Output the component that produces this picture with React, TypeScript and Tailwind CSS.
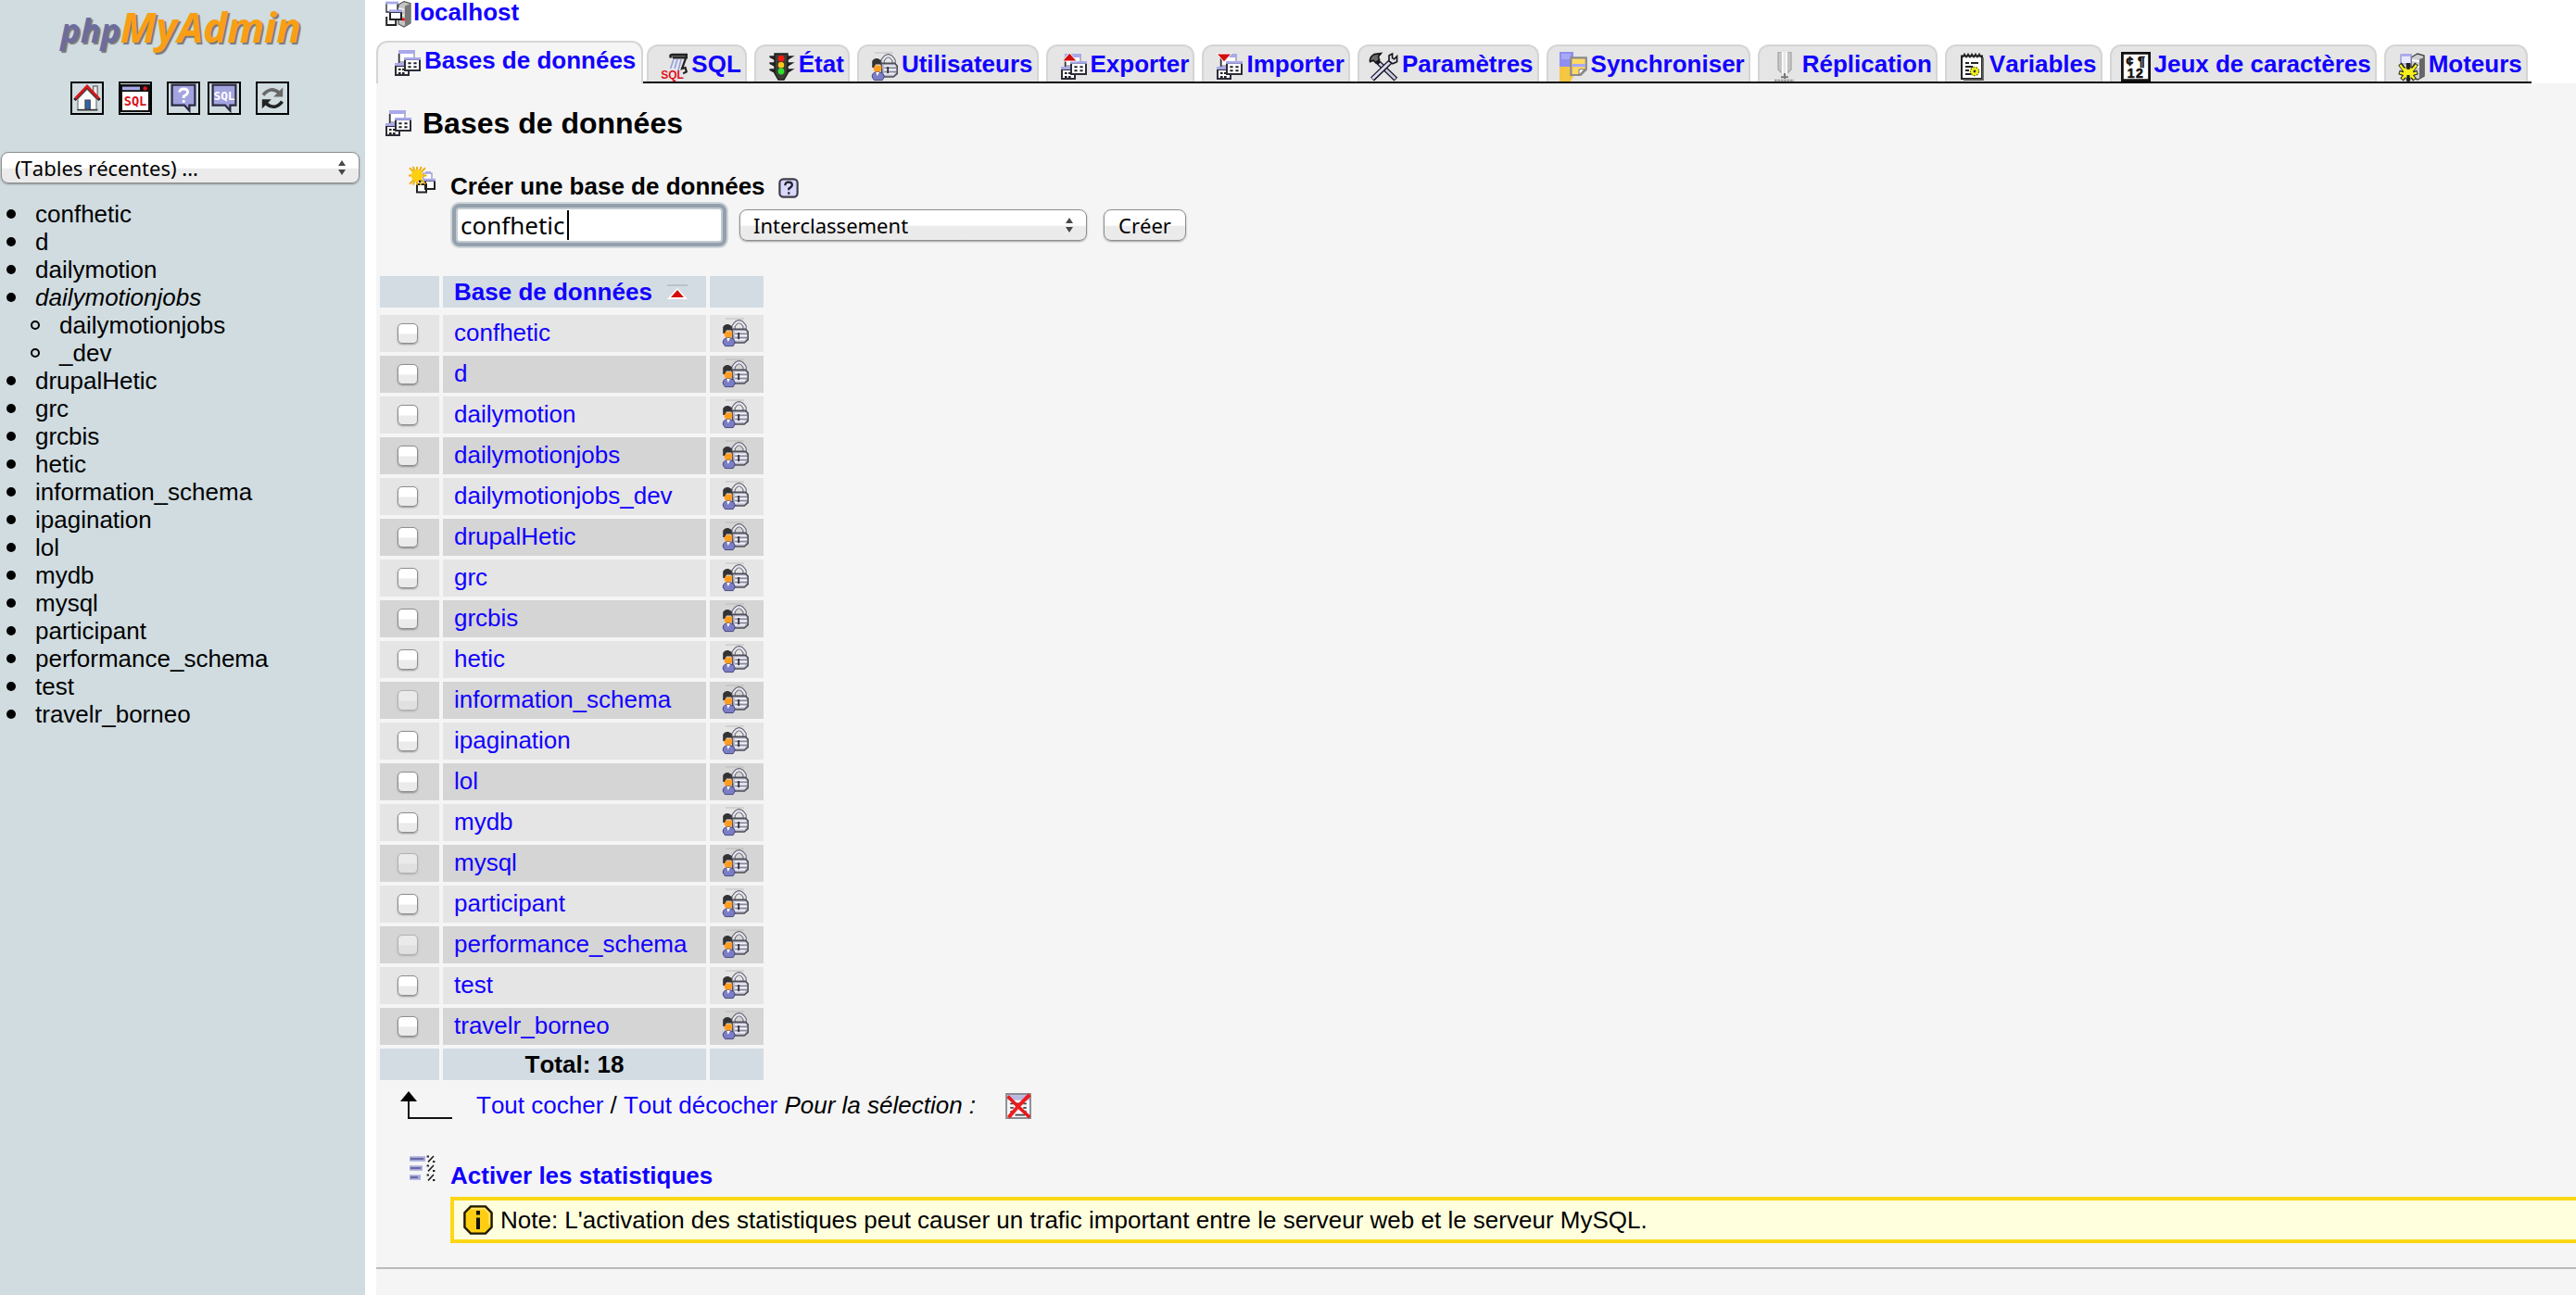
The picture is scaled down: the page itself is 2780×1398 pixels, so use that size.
import React from 'react';

const recentDatabases = [
  'drupalHetic', 'grc', 'grcbis', 'hetic', 'information_schema', 'ipagination', 'lol',
  'mydb', 'mysql', 'participant', 'performance_schema', 'test', 'travelr_borneo',
];

const databases = [
  'confhetic', 'd', 'dailymotion', 'dailymotionjobs', 'dailymotionjobs_dev', ...recentDatabases,
];

const systemDatabases = ['information_schema', 'mysql', 'performance_schema'];

function Icon({ children, className = 'size-8' }: { children: React.ReactNode; className?: string }) {
  return (
    <svg viewBox="0 0 16 16" className={`${className} shrink-0`} aria-hidden="true">
      {children}
    </svg>
  );
}

/* A small window with a title bar and four cells. */
function TableSheets() {
  return (
    <>
      <path d="M4.5 1.5h8v6h-8z" fill="#fff" stroke="#9a9ab4" strokeWidth=".7" />
      <path d="M4 1h9v2H4z" fill="#a9a9ea" />
      <path d="M4.3 3v6" stroke="#333" strokeWidth=".8" />
      <path d="M2.5 9.5h7v5h-7z" fill="#fff" stroke="#2c2c38" />
      <path d="M2 8h6v1.5H2z" fill="#a9a9ea" />
      <path d="M4 11h1.3v1H4zM6 11h1.3v1H6zM4 13h1.3v1H4zM6 13h1.3v1H6z" fill="#222" />
      <path d="M7.5 6h8v6h-8z" fill="#fff" stroke="#2c2c38" />
      <path d="M7 5h9v1.4H7z" fill="#a9a9ea" />
      <path d="M9.2 7.6h1.6v1H9.2zM12.2 7.6h1.6v1h-1.6zM9.2 9.6h1.6v1H9.2zM12.2 9.6h1.6v1h-1.6z" fill="#222" />
    </>
  );
}

const DatabaseIcon = () => <Icon><TableSheets /></Icon>;

const ExportIcon = () => (
  <Icon>
    <TableSheets />
    <path d="M6.6.6 10.6 5H2.8z" fill="#d40d0d" stroke="#fff" strokeWidth=".5" />
  </Icon>
);

const ImportIcon = () => (
  <Icon>
    <TableSheets />
    <path d="M6 5.4 10 1H2z" fill="#d40d0d" stroke="#fff" strokeWidth=".5" />
  </Icon>
);

const ServerIcon = () => (
  <Icon>
    <path d="M9 2.5 12 .8l3.5 1v10.7L12 14.5 9 13z" fill="#c4c4c4" stroke="#555" strokeWidth=".6" />
    <path d="M12.5 3.2 15.5 2v10.6l-3 1.6z" fill="#777" />
    <path d="M9 4.5l3 .8M9 7.5l3 .8" stroke="#f4f4f4" />
    <path d="M2.5 1.5h6v5h-6z" fill="#fff" stroke="#2c2c38" strokeWidth=".7" />
    <path d="M2 .8h7v1.4H2z" fill="#a9a9ea" />
    <path d="M2.6 9v4.5h5V11" fill="#fff" stroke="#222" />
    <path d="M4.5 6.5h6v4h-6z" fill="#fff" stroke="#222" />
    <path d="M4 5.2h7v1.4H4z" fill="#a9a9ea" />
    <path d="M11 9.8h1.4v1.4H11z" fill="#f00" />
  </Icon>
);

const SqlScrollIcon = () => (
  <Icon>
    <path d="M8 3h6l-2 6.5H6.5z" fill="#e4e7fb" />
    <path d="M7 3.2c-.8-1.6 0-1.7 1-1.7h7.5v1.7H8" fill="#777" stroke="#222" strokeWidth="1.2" />
    <path d="M8.5 4 6.8 9M10.5 4 9 9M12.5 4 11 10" stroke="#9aa0c8" strokeWidth=".8" />
    <path d="M15 3.5 13 9l1.8-.5.6 2.2-1.8 1" fill="none" stroke="#222" strokeWidth="1.1" />
    <text x="1.6" y="14.6" fontSize="6" fontWeight="700" fontFamily="Liberation Sans, sans-serif" fill="#e0101a">SQL</text>
  </Icon>
);

const TrafficLightIcon = () => (
  <Icon>
    <path d="M2.6 2.5h2v1.3l-2-1zM2.6 6h2v1.3l-2-1zM2.6 9.5h2v1.3l-2-1zM12 2.5h2.4L12 4zM12 6h2.4L12 7.5zM12 9.5h2.4L12 11z" fill="#222" stroke="#222" strokeWidth=".8" />
    <path d="M5 1h7v10.5L10 15H7l-2-3.5z" fill="#3d3d33" stroke="#1c1c1c" strokeWidth=".7" />
    <circle cx="8.500" cy="3.6" r="1.7" fill="#f21b12" />
    <circle cx="8.500" cy="7.1" r="1.6" fill="#ffc81c" />
    <circle cx="8.500" cy="10.5" r="1.7" fill="#2fe02f" />
  </Icon>
);

const UserLockIcon = () => (
  <Icon>
    <path d="M3.5.5h10" stroke="#b5b5b5" strokeWidth=".4" />
    <path d="M7.8 7V4.6Q10.8-.4 13.800 4.600V7" fill="none" stroke="#5f5f68" strokeWidth="2.1" />
    <path d="M7.8 7V4.600Q10.8-.2 13.800 4.600V7" fill="none" stroke="#e6e6f2" strokeWidth="1.1" />
    <path d="M7 6.200h7.300l1.300 1.300v4.300l-2 1.700H7.500z" fill="#b9bacb" stroke="#4d4d57" strokeWidth=".8" />
    <path d="M8.500 7.600h6.200M8.500 9.700h6.600M8.500 11.800h5.600" stroke="#f4f4fc" strokeWidth=".8" />
    <path d="M8.800 8.700h6.300M8.800 10.800h6.300" stroke="#777784" strokeWidth=".4" />
    <path d="M10.600 8v3.600" stroke="#2d2d36" strokeWidth=".9" />
    <path d="M2.800 7.200h4.300v2.300L5.800 11.200H4.100L2.800 9.500z" fill="#ff9d22" />
    <path d="M2.100 8.500V5Q3 3.300 5 3.500l1.900 1v2.300H4L2.900 8.500z" fill="#333335" />
    <path d="M2.100 13.500q0-2.300 1.900-2.500h2q2.500.2 2.600 2.500l-1 1.800H3.200z" fill="#7b7ec6" stroke="#45477f" strokeWidth=".5" />
    <path d="m4.100 11 .8 2 1.100-2z" fill="#fff" />
  </Icon>
);

const ToolsIcon = () => (
  <Icon>
    <path d="m4.3 4.8 10.4 10" stroke="#15151c" strokeWidth="2.7" />
    <path d="m5.8 6.2 8.6 8.3" stroke="#c9cbe9" strokeWidth="1.4" />
    <path d="M11.8 5.2 2 14.7" stroke="#15151c" strokeWidth="2.8" />
    <path d="M11.5 5.5 2.1 14.5" stroke="#dbdcf5" strokeWidth="1.5" />
    <path d="M.8 5.3Q.3 3 3 1.3L6.7.8 5.2 2.6l.6 1.6-2 1.6-1.2-1.2z" fill="#6d6d68" stroke="#15151c" strokeWidth=".8" />
    <path d="M12.8 1 11 2v3l2 1.4 2.3-1V2.4l-1.5 1.5-1-.6z" fill="#dbdce8" stroke="#15151c" strokeWidth=".8" />
  </Icon>
);

const SyncIcon = () => (
  <Icon>
    <path d="M1 0h7.5v8H1z" fill="#8f8ff2" />
    <path d="M1 8h8v4.5L7 16H1z" fill="#f5c644" />
    <path d="M2 1h5v3H2z" fill="#a8a8f7" />
    <path d="M7.2 3.2h8.2v6.3l-3 3H7.2z" fill="#ffda62" stroke="#8b8b8b" strokeWidth="1.1" />
    <path d="M8 6.5h7v1.600H8z" fill="#a8a8f7" />
    <path d="M11.5 12.3V9.4h3.2z" fill="#fff" stroke="#777" strokeWidth=".5" />
  </Icon>
);

const ReplicationIcon = () => (
  <Icon>
    <path d="M5 0h2v11.5l-2-2zM10 0h2v9.5l-2 2z" fill="#c6c6c6" stroke="#a2a2a2" strokeWidth=".6" />
    <path d="M7.300 0v12M9.600 0v12" stroke="#fff" strokeWidth=".9" />
    <path d="M8.500 11.5v3M6.5 13.600h3.900" stroke="#777" />
    <path d="M3 15.400h10.500" stroke="#969696" strokeWidth="1" strokeDasharray="1.3 .4" />
  </Icon>
);

const VariablesIcon = () => (
  <Icon>
    <path d="M3 2.2h11v12.3H3z" fill="#fff" stroke="#222" />
    <path d="M14.4 3v12H4" fill="none" stroke="#555" />
    <path d="m3.5 3 1-2 1 2 1-2 1 2 1-2 1 2 1-2 1 2 1-2 1 2" fill="none" stroke="#222" strokeWidth=".6" />
    <path d="M5 6h2M8 6h4M5 8h4M5 10h2M5 12h3" stroke="#222" strokeWidth=".9" />
    <circle cx="10" cy="10.5" r="2.3" fill="#f0f01c" stroke="#71710c" strokeWidth=".6" strokeDasharray="1 .6" />
    <circle cx="10" cy="10.5" r=".7" fill="#333" />
  </Icon>
);

const CharsetIcon = () => (
  <Icon>
    <path d="M.7.7h14.6v14.600H.7z" fill="#fff" stroke="#111" strokeWidth="1.4" />
    <g fontFamily="Liberation Sans, sans-serif" fontSize="7" fill="#111" stroke="#111" strokeWidth=".3">
      <text x="2.800" y="7.600">¢</text>
      <text x="9" y="7.600">¶</text>
      <text x="3.400" y="14">1</text>
      <text x="8" y="14">2</text>
    </g>
  </Icon>
);

const EnginesIcon = () => (
  <Icon>
    <path d="M8.500 3 12 1l3.5 1v11L12 15 8.500 13.5z" fill="#cfcfcf" stroke="#444" strokeWidth=".7" />
    <path d="M13 4 15.5 3v10L13 14.5z" fill="#666" />
    <path d="M9 4.500l4 .6M9 7.500l4 .6" stroke="#fff" strokeWidth=".9" />
    <path d="M3 1.5h5.500v5H3z" fill="#e8e8ff" stroke="#8888c8" strokeWidth=".6" />
    <path d="M3 1h6v1.400H3z" fill="#a9a9ea" />
    <path d="M7 6v9.500M2.500 6.500l3 4M11.500 6.500l-3 4M2 11l3 1M12 11l-3 1M3.500 15l2-2.500M10.500 15l-2-2.500" stroke="#222" strokeWidth="2.300" />
    <path d="M2.600 7l3 4M11.400 7l-3 4M2.400 11.200l3 1M11.600 11.200l-3 1M3.700 14.600l2-2.500M10.300 14.600l-2-2.500M5 9.300h4v4H5z" fill="#f6f01c" stroke="#f6f01c" strokeWidth="1.200" />
    <path d="M7 6v3.500M7 12.500V16" stroke="#222" strokeWidth="1.600" />
  </Icon>
);

const NewDatabaseIcon = () => (
  <Icon>
    <path d="M9.500 4.500h4.500v4H9.500z" fill="#fff" stroke="#8c8cb0" strokeWidth=".6" />
    <path d="M6 10.500h5v4.300H6zM10.500 8.500h5V13h-5z" fill="#fff" stroke="#222" />
    <path d="M10 7.400h6v1.300h-6zM10.500 3.500h3v1.200h-3z" fill="#a9a9ea" />
    <path d="M6 1v9.800M1.500 5.800h9.800M2 1.600l8.500 8.700M10.500 1.600 2 10.300M3.800 1l4.400 9.800M8.400 1 3.800 10.800" stroke="#f0b010" strokeWidth="1" />
    <circle cx="6" cy="5.800" r="3.200" fill="#ffd012" />
    <path d="M7 8.300h1.200v1.200H7z" fill="#222" />
  </Icon>
);

const StatisticsIcon = () => (
  <Icon>
    <path d="M2 2.5h8.5M2 7.5h7M2 12.5h6" stroke="#a9a9dc" strokeWidth="2.800" />
    <path d="M2.5 2.5h7M2.5 7.5h5.5M2.5 12.5h4" stroke="#6868a6" strokeWidth="1" />
    <path d="m15 1-3 3.2M15 6l-3 3.2M15 11l-3 3.2" stroke="#222" strokeWidth=".8" />
    <path d="M11.3 1.2h1.2M14.5 4h1.2M11.3 6.2h1.2M14.5 9h1.2M11.3 11.2h1.2M14.5 14h1.2" stroke="#222" strokeWidth="1" />
  </Icon>
);

const DropIcon = () => (
  <Icon className="size-7">
    <path d="M.6.6h14.8v14.800H.6z" fill="#f5f5f8" stroke="#8b8b93" strokeWidth="1.1" />
    <path d="M1.2 1.2h13.600v3.2H1.2z" fill="#b9b9dd" />
    <path d="M3 6.500h2M7 6.500h2M11 6.500h2M3 9h2M11 9h2M3 11.500h2M11 11.500h2M6 13.500h6" stroke="#444" strokeWidth="1" />
    <path d="M1.500 2 6 6.500 15 15" stroke="#e8181c" strokeWidth="2" fill="none" />
    <path d="M15 1 8 8 2 15" stroke="#ee1c20" strokeWidth="2.300" fill="none" />
  </Icon>
);

const InfoIcon = () => (
  <Icon>
    <path d="M4 .7h8l3.3 3.4v7.800L12 15.300H4L.7 11.900V4.100z" fill="#ffce12" stroke="#1c1800" strokeWidth="1.2" />
    <path d="M4.400 1.900h7l2.600 2.600v6" fill="none" stroke="#ffe778" strokeWidth=".7" />
    <path d="M8 3v2.300M8 6.800v6.200" stroke="#111" strokeWidth="2" />
  </Icon>
);

const HelpIcon = () => (
  <Icon className="size-[22px]">
    <rect x="1" y="1" width="14" height="14" rx="3" fill="#d9d9fb" stroke="#3e3e48" strokeWidth="1.600" />
    <path d="M5.300 6q0-2.600 2.800-2.600 2.700 0 2.700 2.200 0 1.400-2.600 2.800v1.300M8.200 11v1.900" fill="none" stroke="#20202c" strokeWidth="1.600" />
  </Icon>
);

const HomeIcon = () => (
  <Icon>
    <path d="M11.3 1.5h2.3v5h-2.3z" fill="#eee" stroke="#777" strokeWidth=".7" />
    <path d="M3 8.3 8 3.2l5 5.1v6H3z" fill="#fafafa" stroke="#777" strokeWidth=".6" />
    <path d="M2.7 14.3h11" stroke="#333" strokeWidth=".8" />
    <path d="M1.2 9 8 1.8 14.8 9" fill="none" stroke="#222" strokeWidth="1.600" />
    <path d="M1.7 8.2 8 1.600l6.3 6.600" fill="none" stroke="#e3161b" strokeWidth="1.3" />
    <path d="M7 9h2.600v5H7z" fill="#2e66b0" stroke="#444" strokeWidth=".6" />
  </Icon>
);

const QueryWindowIcon = () => (
  <Icon>
    <path d="M.5 1h15v14H.5z" fill="#fff" stroke="#111" />
    <path d="M.5 1h15v3.500H.5z" fill="#111" />
    <path d="M1 1.800h9.500v1.800H1z" fill="#a9a9ea" />
    <circle cx="13.3" cy="2.7" r="1.1" fill="#e8141a" />
    <text x="8" y="12.2" textAnchor="middle" fontSize="6.800" fontWeight="700" fontFamily="DejaVu Sans Mono, monospace" fill="#d8141a">SQL</text>
  </Icon>
);

const Bubble = () => (
  <path d="M1.8.8h12.4v11h-3v3L8.500 11.8H1.8z" fill="#a3a3e0" stroke="#2a2a40" strokeWidth="1.1" />
);

const DocsIcon = () => (
  <Icon>
    <Bubble />
    <path d="M5.8 4.8q.3-1.8 2.3-1.8 2.2 0 2.2 1.8 0 1.2-2.2 2.2v1M8.1 9v1.4" fill="none" stroke="#fff" strokeWidth="1.400" />
  </Icon>
);

const SqlDocsIcon = () => (
  <Icon>
    <Bubble />
    <text x="8" y="8.800" textAnchor="middle" fontSize="6.400" fontWeight="700" fontFamily="DejaVu Sans Mono, monospace" fill="#fff">SQL</text>
  </Icon>
);

const ReloadIcon = () => (
  <Icon>
    <path d="M3 6.3q4-5 8.600-1.2" fill="none" stroke="#686868" strokeWidth="1.800" />
    <path d="M13.600 2.300v5H8.600z" fill="#686868" />
    <path d="M13.300 9.800q-4 5-8.600 1.200" fill="none" stroke="#222" strokeWidth="1.800" />
    <path d="M2.400 13.600v-5h5z" fill="#222" />
  </Icon>
);

const tabs = [
  { label: 'SQL', icon: <SqlScrollIcon /> },
  { label: 'État', icon: <TrafficLightIcon /> },
  { label: 'Utilisateurs', icon: <UserLockIcon /> },
  { label: 'Exporter', icon: <ExportIcon /> },
  { label: 'Importer', icon: <ImportIcon /> },
  { label: 'Paramètres', icon: <ToolsIcon /> },
  { label: 'Synchroniser', icon: <SyncIcon /> },
  { label: 'Réplication', icon: <ReplicationIcon /> },
  { label: 'Variables', icon: <VariablesIcon /> },
  { label: 'Jeux de caractères', icon: <CharsetIcon /> },
  { label: 'Moteurs', icon: <EnginesIcon /> },
];

const glossy =
  'border border-[#8e8e8e] bg-linear-to-b from-white from-50% to-[#ebebeb] to-55% shadow-[0_1px_2px_rgba(0,0,0,0.35)]';

function Select({ label, className }: { label: string; className: string }) {
  return (
    <div className={`relative ${className}`}>
      <select
        aria-label={label}
        className={`block h-[34px] w-full appearance-none rounded-lg pl-3.5 font-['Noto_Sans',sans-serif] text-[22px] leading-[30px] ${glossy}`}
      >
        <option>{label}</option>
      </select>
      <svg viewBox="0 0 10 18" className="pointer-events-none absolute top-2 right-3.5 h-[18px] w-2.5" aria-hidden="true">
        <path d="M5 1 9 7H1zM5 17l4-6H1z" fill="#484848" />
      </svg>
    </div>
  );
}

function ToolButton({ label, children }: { label: string; children: React.ReactNode }) {
  return (
    <a href="#" aria-label={label} className="border-2 border-black">
      {children}
    </a>
  );
}

function ListEntry({ name, italic = false, children }: { name: string; italic?: boolean; children?: React.ReactNode }) {
  return (
    <li>
      <div className="flex items-center pl-[7px]">
        <span className="mr-[21px] size-2.5 rounded-full bg-black" />
        <a href="#" className={italic ? 'italic' : ''}>{name}</a>
      </div>
      {children}
    </li>
  );
}

function Sidebar() {
  return (
    <aside className="w-[394px] shrink-0 bg-[#d0dce0]">
      <a
        href="#"
        className="flex h-[88px] items-baseline justify-center pt-1 pr-1 font-['Noto_Sans',sans-serif] leading-[50px] font-bold italic text-shadow-[2px_2px_1px_#77777a]"
      >
        <span className="text-[36px] text-[#6c6c9e]">php</span>
        <span className="text-[44px] text-[#fa9e14]">MyAdmin</span>
      </a>
      <div className="flex justify-center pr-1.5">
        <div className="flex gap-4">
          <ToolButton label="Accueil"><HomeIcon /></ToolButton>
          <ToolButton label="Fenêtre SQL"><QueryWindowIcon /></ToolButton>
          <div className="flex gap-2">
            <ToolButton label="Documentation phpMyAdmin"><DocsIcon /></ToolButton>
            <ToolButton label="Documentation SQL"><SqlDocsIcon /></ToolButton>
          </div>
          <ToolButton label="Actualiser"><ReloadIcon /></ToolButton>
        </div>
      </div>
      <Select label="(Tables récentes) ..." className="mt-10 mr-1.5 ml-px" />
      <ul className="mt-[18px] text-[26px] leading-[30px]">
        <ListEntry name="confhetic" />
        <ListEntry name="d" />
        <ListEntry name="dailymotion" />
        <ListEntry name="dailymotionjobs" italic>
          <ul>
            {['dailymotionjobs', '_dev'].map((name) => (
              <li key={name} className="flex items-center pl-[33px]">
                <span className="mr-[21px] size-2.5 rounded-full border-2 border-black" />
                <a href="#">{name}</a>
              </li>
            ))}
          </ul>
        </ListEntry>
        {recentDatabases.map((name) => <ListEntry key={name} name={name} />)}
      </ul>
    </aside>
  );
}

function Tabs() {
  return (
    <nav className="flex items-end font-bold text-[#1200ff]">
      <a href="#" aria-current="page" className="flex h-[46px] rounded-t-xl border-2 border-b-0 border-[#d5d5d5] bg-[#f5f5f5] pt-1.5 pr-1.5 pl-3.5">
        <DatabaseIcon />
        <span className="-mt-1 ml-1 leading-[34px]">Bases de données</span>
      </a>
      <ul className="flex gap-2 border-b-2 border-black px-1">
        {tabs.map((tab) => (
          <li key={tab.label}>
            <a href="#" className="flex h-10 rounded-t-xl border-2 border-b-0 border-[#d5d5d5] bg-[#e5e5e5] pt-1.5 pr-1 pl-2.5">
              {tab.icon}
              <span className="-mt-1 ml-1 leading-[34px]">{tab.label}</span>
            </a>
          </li>
        ))}
      </ul>
    </nav>
  );
}

function DatabaseTable() {
  return (
    <table className="mt-8 w-[422px] table-fixed border-separate border-spacing-1">
      <colgroup>
        <col className="w-16" />
        <col className="w-[284px]" />
        <col className="w-[58px]" />
      </colgroup>
      <thead>
        <tr className="h-[38px]">
          <th className="border-b-4 border-[#f5f5f5] bg-[#d3dce3]" />
          <th className="border-b-4 border-[#f5f5f5] bg-[#d3dce3] p-0 pl-3 text-left">
            <a href="#" className="flex items-center text-[#1200ff] leading-[30px]">
              Base de données
              <svg viewBox="0 0 22 16" className="ml-4 h-4 w-[22px]" aria-hidden="true">
                <path d="M0 1h22" stroke="#a0a6ac" strokeWidth="1" />
                <path d="M11 4 22 16H0z" fill="#fff" />
                <path d="m11 6 7 8H4z" fill="#d40d0d" />
              </svg>
            </a>
          </th>
          <th className="border-b-4 border-[#f5f5f5] bg-[#d3dce3]" />
        </tr>
      </thead>
      <tbody>
        {databases.map((name) => {
          const locked = systemDatabases.includes(name);
          return (
            <tr key={name} className="h-10 odd:bg-[#e5e5e5] even:bg-[#d5d5d5]">
              <td className="p-0 pr-1">
                <input
                  type="checkbox"
                  aria-label={name}
                  disabled={locked}
                  className={`mx-auto block size-[22px] appearance-none rounded-[5px] disabled:opacity-50 ${glossy}`}
                />
              </td>
              <td className="p-0 pb-0.5 pl-3 leading-[30px]">
                <a href="#" className="text-[#1200ff]">{name}</a>
              </td>
              <td className="p-0 pr-1.5 pb-0.5">
                <a href="#" aria-label={`Vérifier les privilèges pour ${name}`} className="flex justify-center">
                  <UserLockIcon />
                </a>
              </td>
            </tr>
          );
        })}
      </tbody>
      <tfoot>
        <tr className="h-[34px] bg-[#d3dce3]">
          <th className="p-0" />
          <th className="p-0 leading-[30px]">Total: 18</th>
          <th className="p-0" />
        </tr>
      </tfoot>
    </table>
  );
}

export default function App() {
  return (
    <div className="flex min-h-screen bg-white font-['Liberation_Sans',sans-serif] text-[26px] leading-[30px] text-black [font-kerning:none]">
      <Sidebar />
      <main className="ml-3 flex min-w-0 grow flex-col">
        <div className="flex h-11 pl-1.5">
          <a href="#" className="flex items-start font-bold text-[#1200ff]">
            <ServerIcon />
            <span className="-mt-0.5 ml-0.5">localhost</span>
          </a>
        </div>
        <Tabs />
        <div className="grow bg-[#f5f5f5] pt-[22px]">
          <h2 className="flex items-center gap-3 pl-1.5 text-[32px] leading-[42px] font-bold">
            <DatabaseIcon />
            Bases de données
          </h2>
          <form className="mt-6 flex items-start gap-4 pl-8">
            <NewDatabaseIcon />
            <div className="pt-2">
              <div className="flex items-center font-bold">
                <label htmlFor="new-db">Créer une base de données</label>
                <a href="#" aria-label="Documentation" className="ml-3.5 pt-1"><HelpIcon /></a>
              </div>
              <div className="mt-2 flex items-center gap-[18px] pl-1.5">
                <div className="relative">
                  <input
                    id="new-db"
                    type="text"
                    defaultValue="confhetic"
                    className="block h-[38px] w-[288px] rounded-sm border-2 border-[#c2cad1] bg-white pl-[3px] font-['Noto_Sans',sans-serif] text-[26px] leading-[34px] shadow-[0_0_0_4px_#94a0ac,0_0_0_6px_#cdd4da] outline-none"
                  />
                  <span className="absolute top-[3px] left-[120px] h-8 w-0.5 bg-black" />
                </div>
                <Select label="Interclassement" className="w-[375px]" />
                <button type="submit" className={`h-[34px] rounded-lg px-[15px] font-['Noto_Sans',sans-serif] text-[22px] leading-[30px] ${glossy}`}>
                  Créer
                </button>
              </div>
            </div>
          </form>
          <DatabaseTable />
          <div className="mt-2 flex items-start pl-[26px]">
            <svg viewBox="0 0 56 30" className="h-[30px] w-14" aria-hidden="true">
              <path d="M9 4v25H56" fill="none" stroke="#111" strokeWidth="2" />
              <path d="m9 0 9 11H0z" fill="#000" />
            </svg>
            <p className="ml-[26px]">
              <a href="#" className="text-[#1200ff]">Tout cocher</a> / <a href="#" className="text-[#1200ff]">Tout décocher</a>{' '}
              <i>Pour la sélection :</i>
            </p>
            <button type="button" aria-label="Supprimer" className="mt-0.5 ml-8"><DropIcon /></button>
          </div>
          <div className="mt-[38px] flex items-start gap-4 pl-8">
            <StatisticsIcon />
            <div className="grow pt-2">
              <a href="#" className="font-bold text-[#1200ff]">Activer les statistiques</a>
              <div className="mt-2 flex items-center gap-2 border-4 border-r-0 border-[#fdd716] bg-[#ffffdd] py-[5px] pl-2.5">
                <InfoIcon />
                <p>Note: L'activation des statistiques peut causer un trafic important entre le serveur web et le serveur MySQL.</p>
              </div>
            </div>
          </div>
          <hr className="mt-[26px] border-t-2 border-[#bbbbbb]" />
        </div>
      </main>
    </div>
  );
}
